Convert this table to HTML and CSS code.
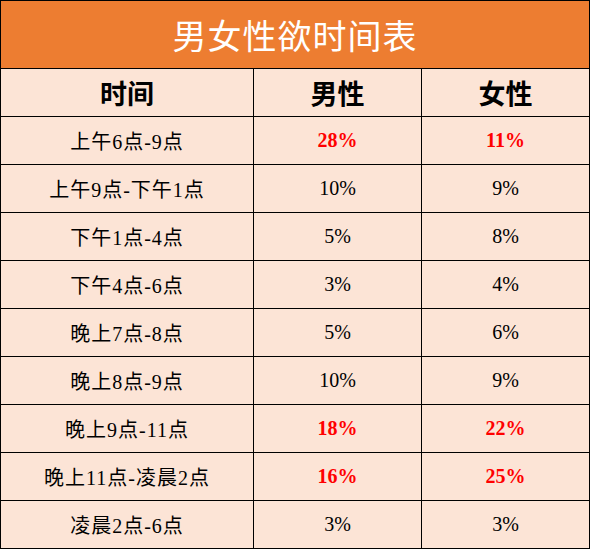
FILE: index.html
```html
<!DOCTYPE html>
<html lang="zh-CN">
<head>
    <meta charset="UTF-8">
    <title>男女性欲时间表</title>
    <link rel="stylesheet" href="styles.css">
</head>
<body>
    <table class="chart">
        <colgroup>
            <col class="col-time">
            <col class="col-val">
            <col class="col-val">
        </colgroup>
        <thead>
            <tr class="title-row">
                <th colspan="3">男女性欲时间表</th>
            </tr>
            <tr class="head-row">
                <th>时间</th>
                <th>男性</th>
                <th>女性</th>
            </tr>
        </thead>
        <tbody>
            <tr><td class="time">上午6点-9点</td><td class="hot">28%</td><td class="hot">11%</td></tr>
            <tr><td class="time">上午9点-下午1点</td><td>10%</td><td>9%</td></tr>
            <tr><td class="time">下午1点-4点</td><td>5%</td><td>8%</td></tr>
            <tr><td class="time">下午4点-6点</td><td>3%</td><td>4%</td></tr>
            <tr><td class="time">晚上7点-8点</td><td>5%</td><td>6%</td></tr>
            <tr><td class="time">晚上8点-9点</td><td>10%</td><td>9%</td></tr>
            <tr><td class="time">晚上9点-11点</td><td class="hot">18%</td><td class="hot">22%</td></tr>
            <tr><td class="time">晚上11点-凌晨2点</td><td class="hot">16%</td><td class="hot">25%</td></tr>
            <tr><td class="time">凌晨2点-6点</td><td>3%</td><td>3%</td></tr>
        </tbody>
    </table>
</body>
</html>
```

FILE: styles.css
```css
body {
    margin: 0;
    background-color: #fff;
}
.chart {
    width: 590px;
    border-collapse: collapse;
    table-layout: fixed;
    font-family: "Liberation Serif", "Noto Sans CJK SC", serif;
    color: #000;
}
.col-time {
    width: 253px;
}
.col-val {
    width: 168px;
}
.chart th,
.chart td {
    border: 1px solid #000;
    padding: 0;
    text-align: center;
    background-color: #fce4d6;
}
.title-row th {
    height: 67px;
    background-color: #ed7d31;
    color: #fff;
    font-size: 34px;
    font-weight: normal;
    letter-spacing: 1px;
}
.head-row th {
    height: 47px;
    font-size: 27px;
    font-weight: bold;
}
.chart td {
    height: 47px;
    font-size: 20px;
}
.chart td.time {
    letter-spacing: 1px;
}
.chart td.hot {
    color: #ff0000;
    font-weight: bold;
}
```
